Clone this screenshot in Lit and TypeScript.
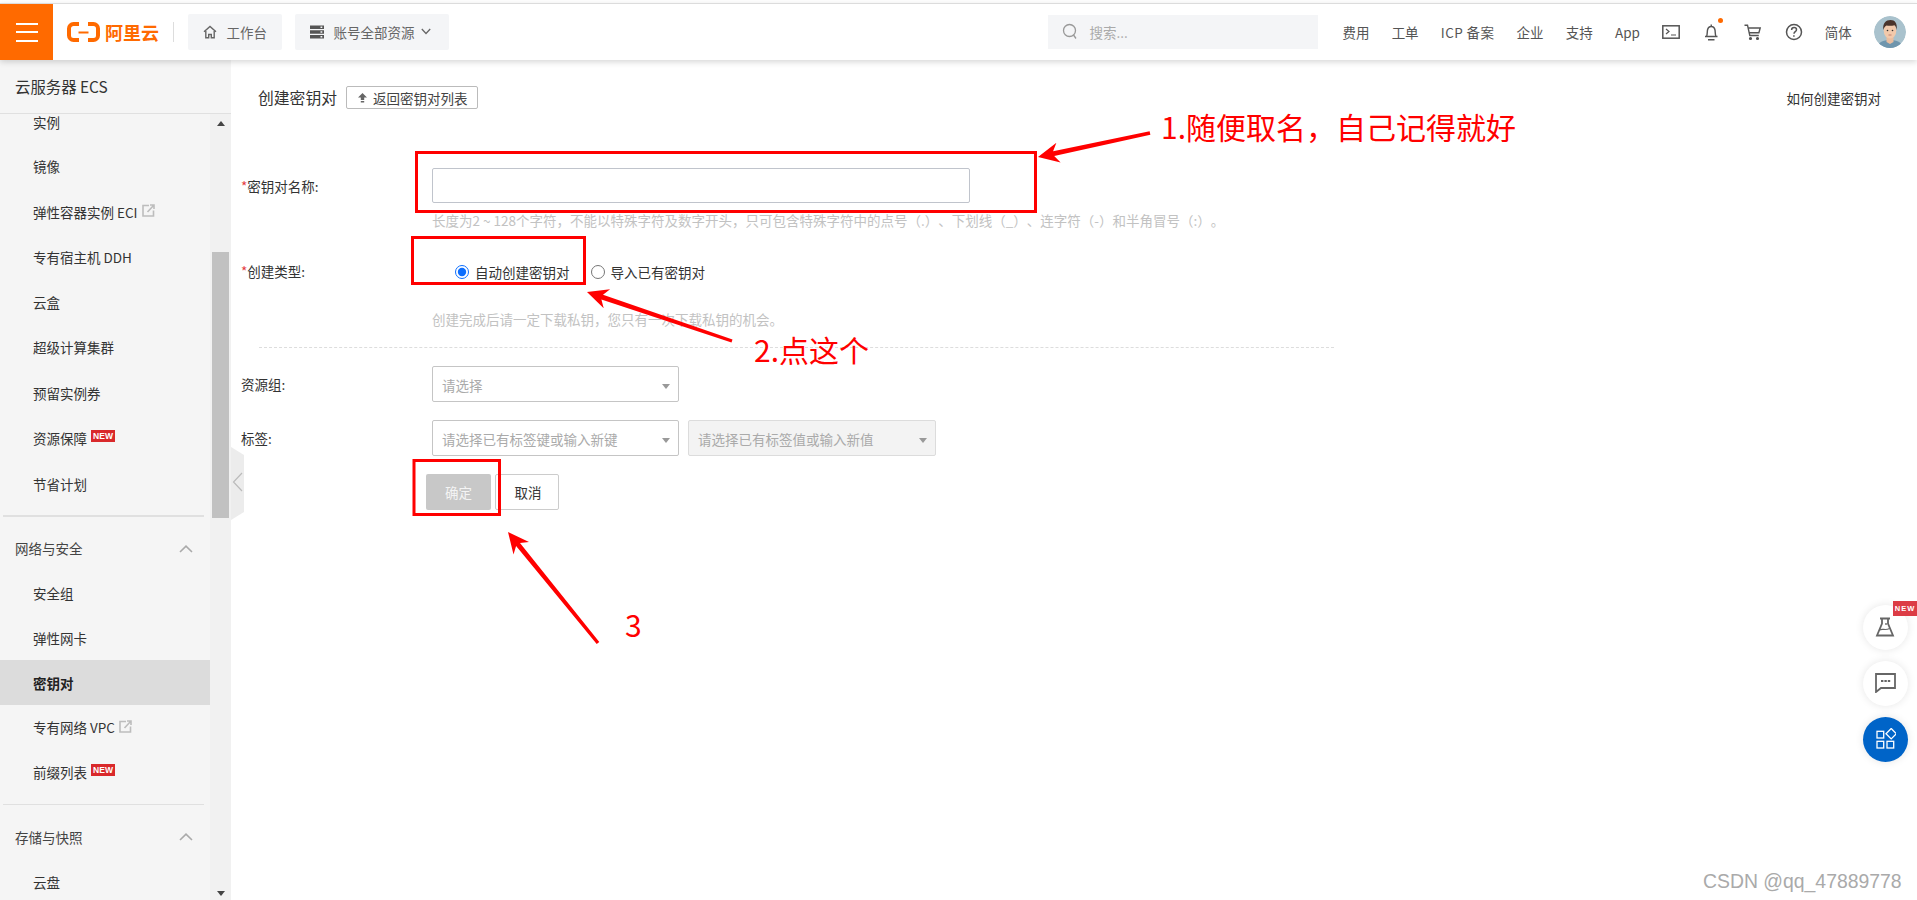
import { LitElement, html, css, svg } from "lit";
import { customElement } from "lit/decorators.js";

type Item = { t: string; badge?: boolean; ext?: boolean; active?: boolean; first?: boolean };

const groupA: Item[] = [
  { t: "实例", first: true }, { t: "镜像" }, { t: "弹性容器实例 ECI", ext: true }, { t: "专有宿主机 DDH" }, { t: "云盒" },
  { t: "超级计算集群" }, { t: "预留实例券" }, { t: "资源保障", badge: true }, { t: "节省计划" },
];
const groupB: Item[] = [
  { t: "安全组" }, { t: "弹性网卡" }, { t: "密钥对", active: true }, { t: "专有网络 VPC", ext: true }, { t: "前缀列表", badge: true },
];

function arrow(x1: number, y1: number, x2: number, y2: number) {
  const dx = x2 - x1, dy = y2 - y1, len = Math.hypot(dx, dy);
  const ux = dx / len, uy = dy / len, px = -uy, py = ux;
  const h = 21, hw = 10, sw = 2.5, tw = 1.7;
  const bx = x2 - ux * h, by = y2 - uy * h;
  const nx = x2 - ux * (h - 5), ny = y2 - uy * (h - 5);
  const p = [
    [x1 + px * tw, y1 + py * tw], [nx + px * sw, ny + py * sw], [bx + px * hw, by + py * hw], [x2, y2],
    [bx - px * hw, by - py * hw], [nx - px * sw, ny - py * sw], [x1 - px * tw, y1 - py * tw],
  ];
  return svg`<polygon points=${p.map((q) => q.map((v) => v.toFixed(1)).join(",")).join(" ")} fill="#f00"></polygon>`;
}

const extIcon = html`<svg class="ext" viewBox="0 0 13 13" width="13" height="13" fill="none" stroke="#bdbdbd" stroke-width="1.6"><path d="M7 1.5H1v10.5h10.5V6.5"/><path d="M5.5 8 L11.5 1.5 M8 1h4v4" /></svg>`;

@customElement("app-root")
export class AppRoot extends LitElement {
  static styles = css`
    :host { display: block; position: relative; width: 1917px; height: 900px; overflow: hidden; background: #fff;
      font-family: "Noto Sans CJK SC", "Noto Sans", sans-serif; font-size: 13.5px; color: #333; text-spacing-trim: space-all; }
    * { box-sizing: border-box; }
    .page { display: flex; flex-direction: column; height: 900px; padding-top: 3px; }
    .topbar { position: relative; z-index: 3; flex: none; display: flex; align-items: center; justify-content: space-between; height: 57px; border-top: 1px solid #dcdcdc; background: #fff; box-shadow: 0 2px 6px rgba(0,0,0,.16); padding-right: 11px; }
    .left, .right { display: flex; align-items: center; height: 100%; }
    .burger { width: 53px; height: 100%; background: #ff6a00; display: flex; flex-direction: column; justify-content: center; align-items: center; gap: 6.5px; }
    .burger i { display: block; width: 22px; height: 2px; background: #fff; }
    .logo { margin-left: 14px; display: block; }
    .brand { margin-left: 5px; width: 56px; font-size: 18px; line-height: 20px; font-weight: 700; color: #ff6a00; white-space: nowrap; }
    .sep { width: 1px; height: 20px; background: #ddd; margin-left: 12px; margin-right: 14px; }
    .pill { height: 36px; display: flex; align-items: center; gap: 9.5px; background: #f4f5f7; border-radius: 2px; padding: 0 15px 1px; color: #666; white-space: nowrap; }
    .pill + .pill { margin-left: 13px; padding-right: 18px; }
    .chev { margin-left: -3px; }
    .search { width: 270px; height: 34px; background: #f4f5f7; display: flex; align-items: center; gap: 11px; padding: 0 0 1px 14px; color: #aaa; margin-right: 24px; }
    .nav { display: flex; align-items: center; gap: 22.2px; color: #555; white-space: nowrap; }
    .wide { letter-spacing: .4px; }
    .bellbox { position: relative; width: 20px; height: 20px; display: flex; justify-content: flex-start; }
    .dot { position: absolute; right: -1px; top: -4px; width: 5px; height: 5px; border-radius: 50%; background: #ff6a00; }
    .avatar { display: block; border-radius: 50%; }

    .body { flex: 1; min-height: 0; display: flex; }
    .side { flex: none; width: 231px; background: #f5f5f5; display: flex; flex-direction: column; }
    .sidehead { flex: none; height: 54px; padding: 15px 15px 0; font-size: 15.4px; line-height: 22px; border-bottom: 1px solid #e0e0e0; color: #333; white-space: nowrap; }
    .sidebody { flex: 1; min-height: 0; display: flex; }
    .list { width: 210px; }
    .item { height: 45.25px; display: flex; align-items: center; gap: 3px; padding-left: 33px; color: #333; white-space: nowrap; }
    .loose .item { padding-bottom: 2px; }
    .loose .item:last-child { padding-bottom: 0; }
    .tight .item { height: 44.5px; }
    .tight .item:first-child { padding-bottom: 2px; }
    .item.first { height: 30.85px; align-items: flex-start; line-height: 16px; padding-bottom: 0; }
    .item.active { background: #dcdcdc; font-weight: 700; color: #222; }
    .ext { margin-left: 1px; margin-top: -2px; }
    .new { width: 24px; height: 12px; margin-left: 1px; background: #d9292b; color: #fff; font: 700 8.5px/12px "Liberation Sans", sans-serif; text-align: center; margin-top: -4px; }
    .div { height: 1px; background: #e0e0e0; margin: 10px 6px 0 3px; }
    .div.thick { height: 2px; margin-top: 8px; }
    .ghead { height: 45px; margin-top: 9.5px; padding: 0 17px 0 15px; display: flex; align-items: center; justify-content: space-between; color: #444; }
    .ghead.lift span { margin-top: -2px; }
    .bar { flex: none; width: 21px; background: #f1f1f1; display: flex; flex-direction: column; align-items: center; }
    .up { width: 0; height: 0; margin-top: 7px; border: 4.5px solid transparent; border-top: 0; border-bottom: 5px solid #444; }
    .thumb { width: 17px; height: 266px; margin-top: 126px; background: #c1c1c1; }
    .down { width: 0; height: 0; margin-top: auto; margin-bottom: 4px; border: 4.5px solid transparent; border-bottom: 0; border-top: 5px solid #444; }

    .main { flex: 1; min-width: 0; padding: 26px 36px 0 11px; }
    .titlerow { display: flex; align-items: center; height: 23px; padding-left: 16px; }
    .title { font-size: 15.8px; white-space: nowrap; }
    .back { margin-left: 9px; width: 132px; height: 23px; background: #fff; border: 1px solid #bbb; border-radius: 2px; display: flex; align-items: center; gap: 6px; padding: 0 0 0 11px; font: inherit; color: #444; white-space: nowrap; }
    .link { margin-left: auto; color: #333; white-space: nowrap; }
    .row { display: grid; grid-template-columns: 190px 1fr; align-items: center; }
    .r1 { margin-top: 59px; }
    .r2 { margin-top: 30px; height: 20px; }
    .lab { margin-left: -1px; color: #333; white-space: nowrap; }
    .r2 .lab { margin-bottom: 6px; }
    .lab b { color: #e4393c; font-weight: 400; }
    .text { display: block; width: 538px; height: 35px; border: 1px solid #c0c4cc; border-radius: 2px; background: #fff; }
    .hint { margin-left: 190px; height: 20px; line-height: 18px; margin-top: 8px; color: #c2c2c2; white-space: nowrap; }
    .hint.h2 { margin-top: 29px; }
    .radios { display: flex; align-items: center; padding-left: 23px; white-space: nowrap; color: #333; }
    .radios input { margin: 0 6px 5px 0; width: 14px; height: 14px; accent-color: #0d6efd; }
    .radios span { margin-bottom: 4px; }
    .radios label { display: flex; align-items: center; margin-right: 21px; }
    .dash { margin: 17px 0 0 17px; width: 1075px; border-top: 1px dashed #ddd; }
    .r3 { margin-top: 18px; }
    .r4 { margin-top: 18px; }
    .sels { display: flex; gap: 9px; }
    .sel { position: relative; width: 247px; height: 36px; border: 1px solid #c5c5c5; border-radius: 2px; padding: 1px 9px 0; line-height: 34px; color: #aaa; background: #fff; white-space: nowrap; }
    .sel.off { width: 248px; background: #f3f3f3; border-color: #dcdcdc; }
    .sel i { position: absolute; right: 8px; top: 17px; width: 0; height: 0; border: 4px solid transparent; border-bottom: 0; border-top: 5px solid #999; }
    .acts { display: flex; gap: 4px; margin: 18px 0 0 184px; }
    .ok, .no { height: 36px; font: inherit; border-radius: 2px; padding: 0; }
    .ok { width: 65px; background: #c8c8c8; border: 0; color: #f4f4f4; }
    .no { width: 64px; background: #fff; border: 1px solid #ccc; color: #333; padding-left: 2px; }

    .over { position: absolute; left: 0; top: 0; width: 1917px; height: 900px; z-index: 5; pointer-events: none; }
    .over text { font-family: "Noto Sans CJK SC", sans-serif; font-size: 30px; fill: #f00; }
    .handle { position: absolute; left: 231px; top: 447px; }
    .fab { position: absolute; left: 1862.5px; width: 45px; height: 45px; border-radius: 50%; background: #fff; box-shadow: 0 0 8px rgba(0,0,0,.1); display: flex; align-items: center; justify-content: center; z-index: 4; }
    .f1 { top: 604.5px; } .f2 { top: 660.5px; } .f3 { top: 716.5px; background: #0064c8; }
    .tag { position: absolute; left: 1893px; top: 601px; width: 24px; height: 15px; background: #dc3c45; color: #fff; font: 700 7.5px/15px "Liberation Sans", sans-serif; letter-spacing: 1px; text-align: center; z-index: 4; }
    .mark { position: absolute; left: 1703px; top: 868px; font: 19.4px/26px "Liberation Sans", sans-serif; color: #aaa; white-space: nowrap; z-index: 6; }
  `;

  private item(i: Item) {
    return html`<div class="item ${i.active ? "active" : ""} ${i.first ? "first" : ""}"><span>${i.t}</span>${i.ext ? extIcon : ""}${i.badge ? html`<span class="new">NEW</span>` : ""}</div>`;
  }

  private chevUp() {
    return html`<svg width="14" height="8" viewBox="0 0 14 8" fill="none" stroke="#aaa" stroke-width="1.6"><path d="M1 7 L7 1.2 L13 7"/></svg>`;
  }

  render() {
    return html`
      <div class="page">
        <header class="topbar">
          <div class="left">
            <div class="burger"><i></i><i></i><i></i></div>
            <svg class="logo" width="33" height="20" viewBox="0 0 33 20" fill="none" stroke="#ff6a00"><path stroke-width="4" d="M12 2H6.5A4.5 4.5 0 0 0 2 6.5v7A4.5 4.5 0 0 0 6.5 18H12"/><path stroke-width="4" d="M21 2h5.500A4.500 4.500 0 0 1 31 6.500v7a4.500 4.500 0 0 1-4.500 4.500H21"/><path stroke-width="2" d="M11.500 10.500h10"/></svg>
            <div class="brand">阿里云</div>
            <div class="sep"></div>
            <div class="pill">
              <svg width="14" height="14" viewBox="0 0 14 14" fill="none" stroke="#666" stroke-width="1.4"><path d="M1 6.800 7 1.500l6 5.300"/><path d="M2.800 6v6.800h2.900V9.500h2.600v3.300h2.900V6"/></svg>
              <span>工作台</span>
            </div>
            <div class="pill">
              <svg width="14" height="14" viewBox="0 0 14 14"><path fill="#555" d="M0 .5h14v3.600H0zM0 5.200h14v3.600H0zM0 9.900h14v3.600H0z"/><path fill="#f4f5f7" d="M10.500 1.600h1.800v1.400h-1.800zM10.500 6.300h1.800v1.400h-1.800zM10.500 11h1.800v1.400h-1.800z"/></svg>
              <span>账号全部资源</span>
              <svg class="chev" width="10" height="7" viewBox="0 0 10 7" fill="none" stroke="#666" stroke-width="1.300"><path d="M.8 1 5 5.500 9.200 1"/></svg>
            </div>
          </div>
          <div class="right">
            <div class="search">
              <svg width="16" height="17" viewBox="0 0 16 17" fill="none" stroke="#999" stroke-width="1.300"><circle cx="7.500" cy="7.500" r="6"/><path d="M11.500 12l2.500 3.500"/></svg>
              <span>搜索...</span>
            </div>
            <nav class="nav">
              <span>费用</span><span>工单</span><span class="wide">ICP 备案</span><span>企业</span><span>支持</span><span>App</span>
              <svg width="18" height="14" viewBox="0 0 18 14" fill="none" stroke="#555" stroke-width="1.500"><rect x=".8" y=".8" width="16.400" height="12.400"/><path d="M4 4l3 2.500L4 9M9 10h5" stroke-width="1.200"/></svg>
              <div class="bellbox">
                <svg width="20" height="20" viewBox="0 0 20 20" fill="none" stroke="#555" stroke-width="1.400"><path d="M3 14.500h12.500M4.500 14.500c1-2 .6-4.500 1-6.500.4-2 1.800-3.500 3.750-3.500S12.600 6 13 8c.4 2 0 4.500 1 6.500M9.250 4.500V2.500M6 17.800h6.500"/></svg>
                <span class="dot"></span>
              </div>
              <svg width="18" height="17" viewBox="0 0 18 17" fill="none" stroke="#555" stroke-width="1.400"><path d="M.5 1.200h3l2.300 10.300h9"/><path d="M4.200 4h12l-1.300 4.800H5"/><circle cx="6.500" cy="14.500" r=".9" fill="#555"/><circle cx="13.500" cy="14.500" r=".9" fill="#555"/></svg>
              <svg width="18" height="18" viewBox="0 0 18 18" fill="none" stroke="#555" stroke-width="1.500"><circle cx="9" cy="9" r="7.500"/><path d="M6.600 7c0-1.500 1.100-2.400 2.500-2.400s2.400.9 2.400 2.100c0 1.900-2.500 2-2.500 4"/><path d="M8.900 12.300v1.500"/></svg>
              <span>简体</span>
              <svg class="avatar" width="32" height="32" viewBox="0 0 32 32">
                <circle cx="16" cy="16" r="16" fill="#a9c2cd"/>
                <path fill="#6f95ad" d="M4 32c0-6 5-8 12-8s12 2 12 8z"/>
                <path fill="#e9bd9f" d="M12.500 20h7v6l-3.500 2-3.500-2z"/>
                <ellipse cx="16" cy="14.500" rx="6.300" ry="8" fill="#f2c9ab"/>
                <path fill="#4a342b" d="M9.300 14C8.500 7 12 4 16.500 4S23.500 7 22.700 14c-.5-2.500-1-4-2.200-4.800-2.500.8-6 .8-8 .3-1.600.8-2.600 2.500-3.200 4.500z"/>
                <circle cx="13.500" cy="14.500" r=".8" fill="#333"/><circle cx="18.500" cy="14.500" r=".8" fill="#333"/>
                <path d="M14.500 19h3" stroke="#b9705f" stroke-width=".8"/>
              </svg>
            </nav>
          </div>
        </header>
        <div class="body">
          <aside class="side">
            <div class="sidehead">云服务器 ECS</div>
            <div class="sidebody">
              <div class="list">
                <div class="loose">${groupA.map((i) => this.item(i))}</div>
                <div class="div thick"></div>
                <div class="ghead lift"><span>网络与安全</span>${this.chevUp()}</div>
                <div class="tight">${groupB.map((i) => this.item(i))}</div>
                <div class="div"></div>
                <div class="ghead"><span>存储与快照</span>${this.chevUp()}</div>
                <div class="item"><span>云盘</span></div>
              </div>
              <div class="bar"><span class="up"></span><span class="thumb"></span><span class="down"></span></div>
            </div>
          </aside>
          <main class="main">
            <div class="titlerow">
              <span class="title">创建密钥对</span>
              <button class="back">
                <svg width="9" height="10" viewBox="0 0 9 10" fill="#666"><path d="M4.500 0 9 4.500H6.200V7H2.800V4.500H0zM2.800 8h3.400v1.600H2.800z"/></svg>
                <span>返回密钥对列表</span>
              </button>
              <span class="link">如何创建密钥对</span>
            </div>
            <div class="row r1">
              <div class="lab"><b>*</b>密钥对名称:</div>
              <input class="text" type="text" />
            </div>
            <div class="hint">长度为2 ~ 128个字符，不能以特殊字符及数字开头，只可包含特殊字符中的点号（.）、下划线（_）、连字符（-）和半角冒号（:）。</div>
            <div class="row r2">
              <div class="lab"><b>*</b>创建类型:</div>
              <div class="radios">
                <label><input type="radio" name="t" checked /><span>自动创建密钥对</span></label>
                <label><input type="radio" name="t" /><span>导入已有密钥对</span></label>
              </div>
            </div>
            <div class="hint h2">创建完成后请一定下载私钥，您只有一次下载私钥的机会。</div>
            <div class="dash"></div>
            <div class="row r3">
              <div class="lab">资源组:</div>
              <div class="sels"><div class="sel">请选择<i></i></div></div>
            </div>
            <div class="row r4">
              <div class="lab">标签:</div>
              <div class="sels">
                <div class="sel">请选择已有标签键或输入新键<i></i></div>
                <div class="sel off">请选择已有标签值或输入新值<i></i></div>
              </div>
            </div>
            <div class="acts"><button class="ok">确定</button><button class="no">取消</button></div>
          </main>
        </div>
      </div>

      <svg class="handle" width="13" height="73" viewBox="0 0 13 73"><polygon points="0,0 13,8 13,65 0,73" fill="#ececec"/><path d="M11 26 2.500 35 11 44" fill="none" stroke="#bbb" stroke-width="1.200"/></svg>

      <div class="fab f1"><svg width="20" height="20" viewBox="0 0 20 20" fill="none" stroke="#666" stroke-width="1.800"><path d="M5 1.500h10M7 1.500v5L2 18.500h16L13 6.500v-5"/><path d="M4.500 13c3-2 5.500 1 10-1.500" stroke-width="1.200"/><circle cx="11" cy="7" r=".9" fill="#666" stroke="none"/></svg></div>
      <div class="tag">NEW</div>
      <div class="fab f2"><svg width="21" height="20" viewBox="0 0 21 20" fill="none" stroke="#666" stroke-width="1.800"><path d="M1 1h19v14H6l-5 4z"/><path d="M6 8h2.400M9.400 8h2.400M12.800 8h2.400" stroke-width="2.200"/></svg></div>
      <div class="fab f3"><svg width="22" height="22" viewBox="0 0 22 22" fill="none" stroke="#fff" stroke-width="1.300"><rect x="3" y="3.300" width="6.700" height="6.700"/><rect x="3" y="13.300" width="6.700" height="6.700"/><rect x="13" y="13.300" width="6.700" height="6.700"/><path d="M17.200.5 22.400 5.700 17.200 10.900 12 5.700z"/></svg></div>
      <div class="mark">CSDN @qq_47889778</div>

      <svg class="over" viewBox="0 0 1917 900" fill="none">
        <rect x="416.500" y="152.500" width="619" height="59" stroke="#f00" stroke-width="3"/>
        <rect x="412.500" y="237.500" width="172" height="46" stroke="#f00" stroke-width="3"/>
        <rect x="414" y="460.500" width="85.500" height="54" stroke="#f00" stroke-width="3"/>
        ${arrow(1150, 133, 1038, 157)}
        ${arrow(732, 341, 587, 292)}
        ${arrow(598, 643, 508, 532)}
        <text x="1161" y="139">1.随便取名，自己记得就好</text>
        <text x="754" y="362">2.点这个</text>
        <text x="625" y="637">3</text>
      </svg>
    `;
  }
}
